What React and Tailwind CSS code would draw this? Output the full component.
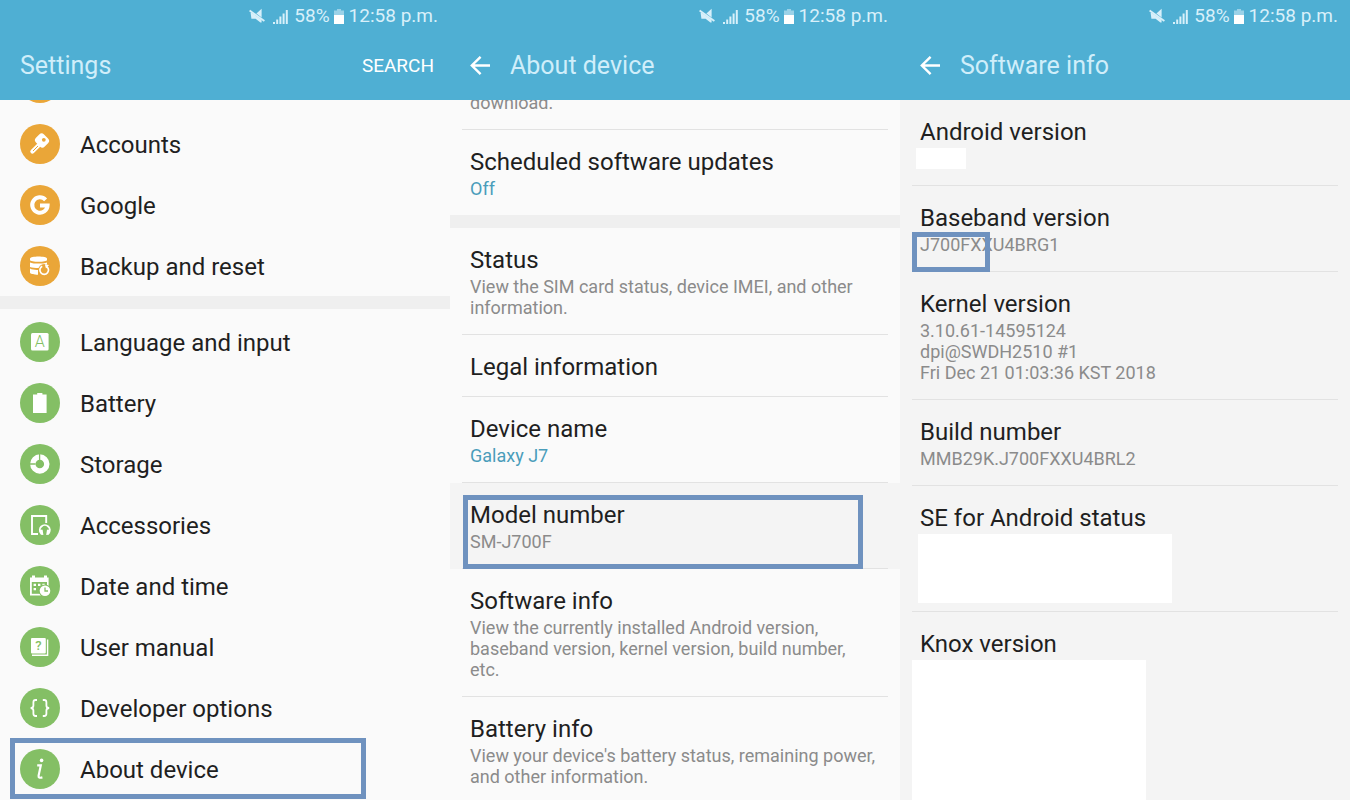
import React from 'react'

const orange = "#eaa638"
const green = "#84bf65"

const KeyIcon = () => (
  <>
    <path d="M12.4 27.6 L20 20" stroke="#fff" strokeWidth="4.2" strokeLinecap="round" />
    <rect x="15.8" y="10.8" width="12.4" height="11.4" rx="3.4" transform="rotate(45 22 16.5)" fill="#fff" />
    <path d="M13 27 L18 22" stroke={orange} strokeWidth="1" />
    <circle cx="23.8" cy="15.8" r="1.9" fill={orange} />
  </>
)

const GoogleIcon = () => (
  <path d="M25.6 14.8 A7.7 7.7 0 1 0 27.6 20.4 L20 20.4" fill="none" stroke="#fff" strokeWidth="4" />
)

const BackupIcon = () => (
  <>
    <path d="M10 12.6 C10 9.8 27 9.8 27 12.6 V14 C27 16.4 10 16.4 10 14 Z" fill="#fff" />
    <path d="M10 16.4 C14 18 23 18 27 16.4 V21 C23 22.4 14 22.4 10 21 Z" fill="#fff" />
    <path d="M10 22.6 C12 23.8 15 24 18 23.9 V28.8 C14 28.8 10 28 10 26.6 Z" fill="#fff" />
    <circle cx="24.2" cy="24" r="6" fill={orange} />
    <path d="M22.2 20.2 A4.3 4.3 0 1 0 26.2 20.2" fill="none" stroke="#fff" strokeWidth="1.7" />
    <path d="M24.8 18.2 L29 19 L26 22.4 Z" fill="#fff" />
  </>
)

const LanguageIcon = () => (
  <>
    <rect x="11" y="11" width="17.6" height="17.6" rx="1.5" fill="#fff" />
    <text x="19.8" y="25.4" textAnchor="middle" fontSize="16" fontWeight="300" fill={green} fontFamily="Roboto, sans-serif">A</text>
  </>
)

const BatteryIcon = () => (
  <path d="M13 11.4 H17.2 V10 H22.4 V11.4 H26.6 V30 H13 Z" fill="#fff" />
)

const StorageIcon = () => (
  <>
    <circle cx="19.8" cy="20" r="7" fill="none" stroke="#fff" strokeWidth="5.4" />
    <path d="M19.6 9.6 V16 M9.4 20 H15.6" stroke={green} strokeWidth="1.3" />
  </>
)

const AccessoriesIcon = () => (
  <>
    <path d="M18 29 H12 V11 H26.2 V18" fill="none" stroke="#fff" strokeWidth="1.9" />
    <path d="M21 28.4 A5 5 0 1 1 28.6 28.4" fill="none" stroke="#fff" strokeWidth="1.8" />
    <path d="M19.2 24.6 L22.6 24.8 L23.4 30 L20.8 29.8 Z M30.4 24.6 L27 24.8 L26.2 30 L28.8 29.8 Z" fill="#fff" />
  </>
)

const DateIcon = () => (
  <>
    <path d="M10 29.4 V11.4 H12 V9.6 H15 V11.4 H24 V9.6 H27 V11.4 H28.6 V29.4 Z" fill="#fff" />
    <path d="M11.8 16 H27 V27.8 H11.8 Z" fill={green} />
    <path d="M13.6 17.8 h2.4 v2.2 h-2.4 z M18 17.8 h2.4 v2.2 h-2.4 z M22.4 17.8 h2.4 v2.2 h-2.4 z M13.6 22 h2.4 v2.2 h-2.4 z" fill="#fff" />
    <circle cx="25" cy="24.8" r="6.4" fill={green} />
    <circle cx="25" cy="24.8" r="5.3" fill="#fff" />
    <path d="M25 21.4 V25 H28" fill="none" stroke={green} strokeWidth="1.3" />
  </>
)

const ManualIcon = () => (
  <>
    <rect x="11" y="11" width="14.8" height="15.6" rx="1" fill="#fff" />
    <path d="M12 28.2 H27.6 V12.4" fill="none" stroke="#fff" strokeWidth="1.4" />
    <text x="18.4" y="23.4" textAnchor="middle" fontSize="13" fontWeight="500" fill={green} fontFamily="Roboto, sans-serif">?</text>
  </>
)

const DeveloperIcon = () => (
  <path d="M17 12 H15.6 C14 12 13.4 12.8 13.4 14.2 V17.4 C13.4 19 12.4 20 10.6 20 C12.4 20 13.4 21 13.4 22.6 V25.8 C13.4 27.2 14 28 15.6 28 H17 M22.8 12 H24.2 C25.8 12 26.4 12.8 26.4 14.2 V17.4 C26.4 19 27.4 20 29.2 20 C27.4 20 26.4 21 26.4 22.6 V25.8 C26.4 27.2 25.8 28 24.2 28 H22.8" fill="none" stroke="#fff" strokeWidth="1.8" />
)

const InfoIcon = () => (
  <>
    <circle cx="21.6" cy="11.4" r="1.8" fill="#fff" />
    <path d="M17.2 16.4 H20.8 L18.6 26.6 C18.3 28.6 19.4 29.2 22.4 28.4" fill="none" stroke="#fff" strokeWidth="2.2" />
  </>
)

const accountRows = [
  { label: "Accounts", Icon: KeyIcon },
  { label: "Google", Icon: GoogleIcon },
  { label: "Backup and reset", Icon: BackupIcon },
]

const systemRows = [
  { label: "Language and input", Icon: LanguageIcon },
  { label: "Battery", Icon: BatteryIcon },
  { label: "Storage", Icon: StorageIcon },
  { label: "Accessories", Icon: AccessoriesIcon },
  { label: "Date and time", Icon: DateIcon },
  { label: "User manual", Icon: ManualIcon },
  { label: "Developer options", Icon: DeveloperIcon },
  { label: "About device", Icon: InfoIcon, marked: true },
]

const Circle = ({ color, children }) => (
  <svg viewBox="0 0 40 40" className="size-10 shrink-0" aria-hidden="true">
    <circle cx="20" cy="20" r="20" fill={color} />
    {children}
  </svg>
)

const StatusBar = () => (
  <div className="flex h-8 items-center justify-end pr-3 text-[19px] text-[#d8f0fa]">
    <svg viewBox="0 0 16 16" className="size-4 mr-2" aria-hidden="true">
      <path d="M7.4 5.4 L12.6 0.8 V9.4 Z" fill="currentColor" />
      <path d="M1.6 4.8 L3 5 L12.6 11.8 V14.4 L11.4 14.4 L6.6 10.8 H2.4 Z" fill="currentColor" />
      <path d="M0.6 2.6 L15.4 13" stroke="currentColor" strokeWidth="1.8" />
    </svg>
    <svg viewBox="0 0 15 15" className="size-[15px] mr-1.5" aria-hidden="true">
      <path d="M0 13h2v2H0z M3.2 10.5h2V15h-2z M6.4 7.5h2V15h-2z M9.6 4.5h2V15h-2z M12.8 1h2v14h-2z" fill="currentColor" />
    </svg>
    <span>58%</span>
    <svg viewBox="0 0 10 15" className="h-[15px] w-2.5 ml-1 mr-[5px]" aria-hidden="true">
      <path d="M0 1.4h3V0h4v1.4h3V6H0z" fill="#9bd2e8" />
      <path d="M0 6h10v9H0z" fill="#fff" />
    </svg>
    <span>12:58 p.m.</span>
  </div>
)

const Header = ({ title, back, action }) => (
  <header className="relative z-10 h-[100px] shrink-0 bg-[#4fafd3]">
    <StatusBar />
    <div className="flex h-[68px] items-center px-4">
      {back && (
        <button type="button" aria-label="Back" className="ml-1 mr-5">
          <svg viewBox="0 0 20 20" className="size-5" fill="none" stroke="#fff" strokeWidth="2.4" aria-hidden="true">
            <path d="M20 9.5 H1.6 M10.6 0.8 L1.8 9.5 L10.6 18.2" />
          </svg>
        </button>
      )}
      <h1 className={`text-[25px] text-[#d0eefa] ${back ? "" : "ml-1"}`}>{title}</h1>
      {action && <button type="button" className="ml-auto text-[19px] text-white">{action}</button>}
    </div>
  </header>
)

const Mark = ({ className }) => (
  <div className={`pointer-events-none absolute z-10 border-5 border-[#6f92bf] ${className}`}></div>
)

const SettingsRow = ({ label, Icon, color, marked }) => (
  <li className="relative">
    <button type="button" className="flex h-[61px] w-full items-center gap-5 px-5 text-left text-2xl text-[#1f1f1f]">
      <Circle color={color}><Icon /></Circle>
      <span className="pt-0.5">{label}</span>
    </button>
    {marked && <Mark className="inset-y-0 left-2.5 w-[356px]" />}
  </li>
)

const Item = ({ title, children, accent, active, last, mark }) => (
  <li className={`relative px-3 ${active ? "bg-[#f4f4f4]" : ""}`}>
    <div className={`pl-2 pr-3 pt-[18px] ${children ? "pb-4" : "pb-3.5"} ${last ? "" : "border-b border-[#e2e2e2]"}`}>
      <h2 className="text-2xl leading-[29px] text-[#1f1f1f]">{title}</h2>
      {children && (
        <div className={`mt-px text-lg leading-[21px] ${accent ? "text-[#4a9dba]" : "text-[#8b8b8b]"}`}>{children}</div>
      )}
    </div>
    {mark && <Mark className={mark} />}
  </li>
)

const Gap = () => <div className="h-[13px] bg-[#efefef]"></div>

const App = () => {
  const screenStyle = "flex h-screen min-w-0 flex-col overflow-hidden"

  return (
    <main className="grid grid-cols-3 font-[Roboto,sans-serif]">
      <section className={`${screenStyle} bg-[#fafafa]`}>
        <Header title="Settings" action="SEARCH" />
        {/* list is scrolled, only the tip of the row above shows */}
        <div className="-mt-12">
          <div className="flex h-[61px] items-center px-5">
            <Circle color={orange} />
          </div>
          <ul>
            {accountRows.map((row) => <SettingsRow key={row.label} color={orange} {...row} />)}
          </ul>
          <Gap />
          <ul className="py-0.5">
            {systemRows.map((row) => <SettingsRow key={row.label} color={green} {...row} />)}
          </ul>
        </div>
      </section>

      <section className={`${screenStyle} bg-[#fafafa]`}>
        <Header title="About device" back />
        <div className="-mt-2">
          <div className="mx-3 border-b border-[#e2e2e2] px-2 pb-4 text-lg leading-[21px] text-[#8b8b8b]">download.</div>
          <ul>
            <Item title="Scheduled software updates" accent last>Off</Item>
          </ul>
          <Gap />
          <ul>
            <Item title="Status">View the SIM card status, device IMEI, and other information.</Item>
            <Item title="Legal information" />
            <Item title="Device name" accent>Galaxy J7</Item>
            <Item title="Model number" active mark="left-[13px] right-[37px] top-3 bottom-0">SM-J700F</Item>
            <Item title="Software info">View the currently installed Android version, baseband version, kernel version, build number, etc.</Item>
            <Item title="Battery info" last>View your device's battery status, remaining power, and other information.</Item>
          </ul>
        </div>
      </section>

      <section className={`${screenStyle} bg-[#f4f4f4]`}>
        <Header title="Software info" back />
        <ul>
          <Item title="Android version">
            <div className="-ml-1 h-[21px] w-[50px] bg-white"></div>
          </Item>
          <Item title="Baseband version" mark="left-3 bottom-0 h-10 w-[78px]">J700FXXU4BRG1</Item>
          <Item title="Kernel version">
            <p>3.10.61-14595124</p>
            <p>dpi@SWDH2510 #1</p>
            <p>Fri Dec 21 01:03:36 KST 2018</p>
          </Item>
          <Item title="Build number">MMB29K.J700FXXU4BRL2</Item>
          <Item title="SE for Android status">
            <div className="-mb-2 -ml-0.5 h-[69px] w-[254px] bg-white"></div>
          </Item>
          <Item title="Knox version" last>
            <div className="-ml-2 h-40 w-[234px] bg-white"></div>
          </Item>
        </ul>
      </section>
    </main>
  )
}

export default App
